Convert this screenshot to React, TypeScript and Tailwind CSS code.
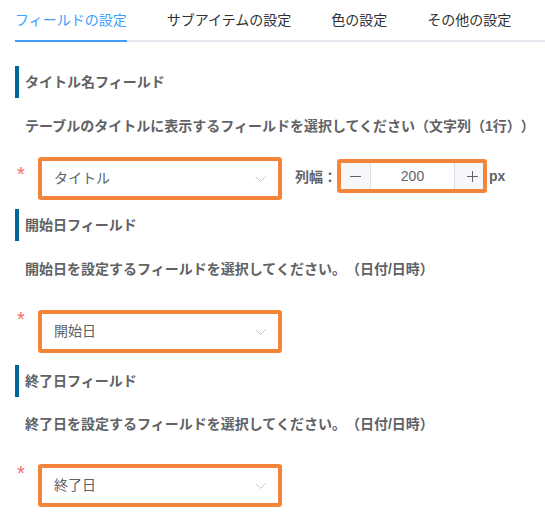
import React from "react";

const Chevron = () => (
  <svg width="11" height="6" viewBox="0 0 11 6" fill="none">
    <polyline points="0.5,0.5 5.5,5.5 10.5,0.5" stroke="#C0C4CC" strokeWidth="1" />
  </svg>
);

const Select = ({ value }: { value: string }) => (
  <div className="w-[244px] h-[43px] border-4 border-[#F4843A] rounded-[3px] bg-white flex items-center justify-between pl-[12px] pr-[12px]">
    <span className="text-[14px] text-[#606266]">{value}</span>
    <Chevron />
  </div>
);

const Header = ({ title, className }: { title: string; className: string }) => (
  <div className={`h-[32px] flex items-center border-l-4 border-[#006699] pl-[6px] text-[14px] font-bold text-[#606266] ${className}`}>
    {title}
  </div>
);

const Desc = ({ text, className }: { text: string; className: string }) => (
  <div className={`h-[20px] leading-[20px] pl-[10px] text-[14px] font-bold text-[#606266] whitespace-nowrap ${className}`}>
    {text}
  </div>
);

const Star = ({ className }: { className: string }) => (
  <span className={`block w-[23px] pl-[2px] h-[20px] leading-none text-[20px] text-[#F56C6C] ${className}`}>*</span>
);

export default function App() {
  const tabs = ["フィールドの設定", "サブアイテムの設定", "色の設定", "その他の設定"];
  return (
    <div
      className="w-[545px] h-[516px] bg-white overflow-hidden pl-[15px] [text-spacing-trim:space-all]"
      style={{ fontFamily: '"Liberation Sans", "Noto Sans CJK JP", sans-serif' }}
    >
      <div className="flex gap-10 border-b-2 border-[#E4E7ED]">
        {tabs.map((t, i) => (
          <div
            key={t}
            className={
              i === 0
                ? "h-[42px] leading-[40px] -mb-[2px] border-b-2 border-[#409EFF] text-[14px] text-[#409EFF]"
                : "h-[42px] leading-[40px] -mb-[2px] border-b-2 border-transparent text-[14px] text-[#303133]"
            }
          >
            {t}
          </div>
        ))}
      </div>

      <Header title="タイトル名フィールド" className="mt-[24px]" />
      <Desc
        text="テーブルのタイトルに表示するフィールドを選択してください（文字列（1行））"
        className="mt-[18px]"
      />
      <div className="mt-[21px] flex items-start">
        <Star className="mt-[7px]" />
        <Select value="タイトル" />
        <span className="ml-[13px] h-[43px] leading-[40px] text-[14px] font-bold text-[#606266]">列幅：</span>
        <div className="mt-[2px] w-[150px] h-[34px] border-4 border-[#F4843A] rounded-[3px] flex bg-white">
          <div className="w-[30px] bg-[#F5F7FA] border-r border-[#DCDFE6] flex items-center pl-[9px]">
            <svg width="11" height="11" viewBox="0 0 11 11">
              <line x1="0" y1="5.5" x2="11" y2="5.5" stroke="#606266" strokeWidth="1" />
            </svg>
          </div>
          <div className="flex-1 flex items-center justify-center text-[14px] text-[#606266]">200</div>
          <div className="w-[29px] bg-[#F5F7FA] border-l border-[#DCDFE6] flex items-center pl-[12px]">
            <svg width="11" height="11" viewBox="0 0 11 11">
              <line x1="0" y1="5.5" x2="11" y2="5.5" stroke="#606266" strokeWidth="1" />
              <line x1="5.5" y1="0" x2="5.5" y2="11" stroke="#606266" strokeWidth="1" />
            </svg>
          </div>
        </div>
        <span className="ml-[2px] h-[43px] leading-[38px] text-[14px] font-bold text-[#606266]">px</span>
      </div>

      <Header title="開始日フィールド" className="mt-[9px]" />
      <Desc text="開始日を設定するフィールドを選択してください。（日付/日時）" className="mt-[18px]" />
      <div className="mt-[31px] flex items-start">
        <Star className="-mt-[1px]" />
        <Select value="開始日" />
      </div>

      <Header title="終了日フィールド" className="mt-[12px]" />
      <Desc text="終了日を設定するフィールドを選択してください。（日付/日時）" className="mt-[17px]" />
      <div className="mt-[30px] flex items-start">
        <Star className="-mt-[1px]" />
        <Select value="終了日" />
      </div>
    </div>
  );
}
